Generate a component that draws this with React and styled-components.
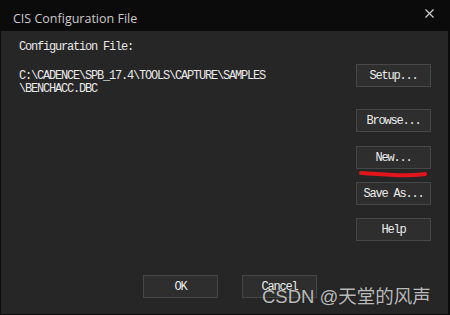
import React from 'react';
import styled, { createGlobalStyle } from 'styled-components';

const Global = createGlobalStyle`
  html, body {
    margin: 0;
    padding: 0;
    background: #0b0b0b;
  }
`;

const mono = `"Liberation Mono", "Noto Sans CJK SC", monospace`;

const Window = styled.div`
  position: relative;
  width: 450px;
  height: 315px;
  display: flex;
  flex-direction: column;
  background: #0b0b0b;
  box-sizing: border-box;
  padding: 0 2px 1px 1px;
  overflow: hidden;
`;

const TitleBar = styled.div`
  height: 31px;
  flex: none;
  display: flex;
  align-items: flex-start;
  justify-content: space-between;
  padding: 0 14px 0 12px;
  box-sizing: border-box;
`;

const Title = styled.div`
  margin-top: 10px;
  font-family: "Open Sans", "Liberation Sans", sans-serif;
  font-size: 12.5px;
  color: #c9c9c9;
`;

const Close = styled.svg`
  margin-top: 9px;
  width: 9px;
  height: 9px;
`;

const Body = styled.div`
  flex: 1;
  display: flex;
  flex-direction: column;
  background: #262626;
  padding: 10px 17px 16px 18px;
  font-family: ${mono};
  font-size: 12px;
  letter-spacing: -1.2px;
  color: #e8e8e8;
`;

const Main = styled.div`
  flex: 1;
  display: flex;
  justify-content: space-between;
`;

const Info = styled.div`
  display: flex;
  flex-direction: column;
`;

const Label = styled.div`
  line-height: 13px;
  margin-bottom: 16px;
`;

const Path = styled.div`
  line-height: 13px;
`;

const Buttons = styled.div`
  display: flex;
  flex-direction: column;
  padding-top: 23px;
`;

const Button = styled.div`
  position: relative;
  width: 75px;
  height: 23px;
  margin-top: ${p => p.$space || 0}px;
  box-sizing: border-box;
  border: 1px solid #474747;
  background: #2e2e2e;
  display: flex;
  align-items: center;
  justify-content: center;
  font-family: ${mono};
  font-size: 12px;
  letter-spacing: -1.2px;
  color: #ececec;
`;

const Footer = styled.div`
  display: flex;
  gap: 24px;
  padding-left: 124px;
`;

const Scribble = styled.svg`
  position: absolute;
  left: 2px;
  top: 22px;
  width: 68px;
  height: 9px;
  overflow: visible;
`;

const Watermark = styled.div`
  position: absolute;
  left: 262px;
  top: 282px;
  font-family: "Liberation Sans", "Noto Sans CJK SC", sans-serif;
  font-size: 18.5px;
  color: rgba(225, 225, 225, 0.82);
  text-shadow: 0 0 1px rgba(0, 0, 0, 0.6);
  letter-spacing: 0;
  white-space: nowrap;
`;

export default function App() {
  return (
    <Window>
      <Global />
      <TitleBar>
        <Title>CIS Configuration File</Title>
        <Close viewBox="0 0 9 9">
          <path d="M0.5 0.5 L8.5 8.5 M8.5 0.5 L0.5 8.5" stroke="#cfcfcf" strokeWidth="1.2" />
        </Close>
      </TitleBar>
      <Body>
        <Main>
          <Info>
            <Label>Configuration File:</Label>
            <Path>C:\CADENCE\SPB_17.4\TOOLS\CAPTURE\SAMPLES</Path>
            <Path>\BENCHACC.DBC</Path>
          </Info>
          <Buttons>
            <Button>Setup...</Button>
            <Button $space={22}>Browse...</Button>
            <Button $space={14}>
              New...
              <Scribble viewBox="0 0 68 9">
                <path d="M2 4 C 18 5, 30 6, 44 6.2 S 60 5.5, 66 5" stroke="#e0161c" strokeWidth="4" strokeLinecap="round" fill="none" />
              </Scribble>
            </Button>
            <Button $space={13}>Save As...</Button>
            <Button $space={13}>Help</Button>
          </Buttons>
        </Main>
        <Footer>
          <Button>OK</Button>
          <Button>Cancel</Button>
        </Footer>
      </Body>
      <Watermark>CSDN @天堂的风声</Watermark>
    </Window>
  );
}
